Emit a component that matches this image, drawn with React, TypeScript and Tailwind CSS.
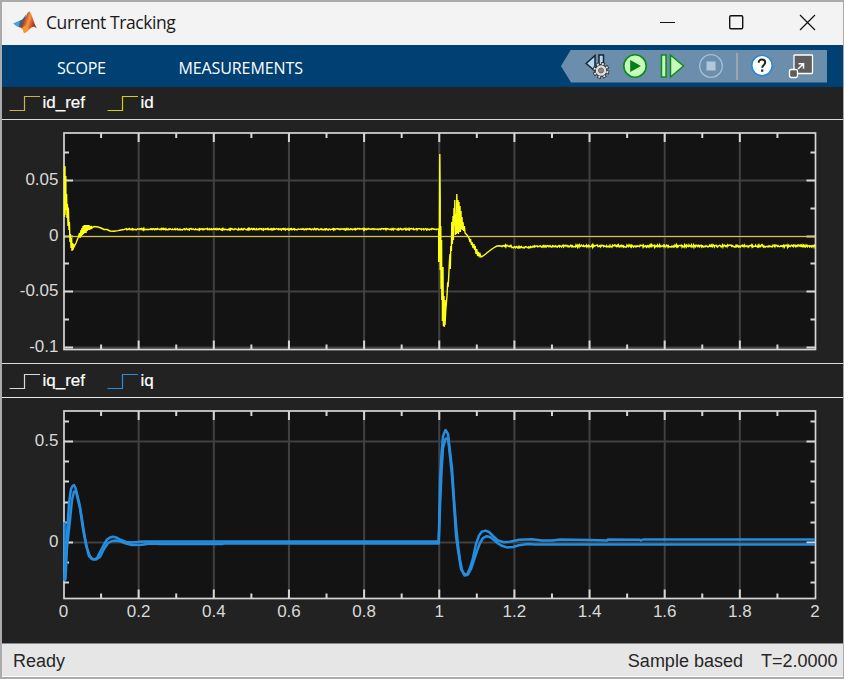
import { ReactNode } from 'react'

type Point = [number, number]

interface TickType {
  y: number
  label?: string
}

interface LegendItemType {
  name: string
  color: string
}

interface PlotPropsType {
  offset: number
  height: number
  top: number
  bottom: number
  ticks: TickType[]
  xLabels?: boolean
  children: ReactNode
}

const LEFT = 64
const RIGHT = 815.5
const STEP = (RIGHT - LEFT) / 20

const idTicks: TickType[] = [
  { y: 152.5 },
  { y: 180.5, label: '0.05' },
  { y: 208.5 },
  { y: 236.5, label: '0' },
  { y: 263.5 },
  { y: 291.5, label: '-0.05' },
  { y: 319.5 },
  { y: 347.5, label: '-0.1' },
]

const iqTicks: TickType[] = [
  { y: 421.5 },
  { y: 441.5, label: '0.5' },
  { y: 461.5 },
  { y: 481.5 },
  { y: 502.5 },
  { y: 522.5 },
  { y: 542.5, label: '0' },
  { y: 562.5 },
  { y: 582.5 },
]

// small repeatable ripple around a steady value
const ripple = (from: number, to: number, y: number, amp: number): Point[] => {
  const points: Point[] = []
  let seed = from * 7 + 13
  for (let x = from; x <= to; x += 0.5) {
    seed = (seed * 16807) % 2147483647
    points.push([x, y + ((seed % 1000) / 1000 - 0.5) * 2 * amp])
  }
  return points
}

const idTrace: Point[] = [
  [64.5, 217], [64.5, 167], [65, 167], [65, 215], [65.8, 176], [66, 210],
  [66.6, 194], [67, 218], [67.4, 204], [68, 226], [68.4, 209], [69, 230],
  [69.4, 222], [70, 242], [70.5, 234], [71, 248], [71.6, 238], [72, 251],
  [72.6, 243], [73, 250], [73.5, 244], [74, 247], [76, 243], [78, 238],
  [79.5, 233], [80, 238], [81, 230], [81.5, 236], [82, 228], [82.6, 235],
  [83, 226], [83.6, 234], [84.2, 225], [84.8, 233], [85.4, 225], [86, 233],
  [86.6, 225], [87.2, 231], [87.8, 225], [88.4, 230], [89, 225], [89.6, 230],
  [90.2, 226], [90.8, 229], [91.5, 226], [92, 228], [94, 226.5], [98, 227],
  [101, 228], [104, 229.5], [107, 229.5], [110, 231], [114, 231.2],
  [118, 230.6], [121, 230], [124, 229.5],
  ...ripple(126, 438, 229.2, 0.7),
  [438.7, 229], [438.7, 262], [439.4, 230], [439.8, 154], [440.2, 200],
  [440.2, 270], [440.8, 226], [441, 289], [441.6, 240], [441.8, 300],
  [442.4, 280], [442.4, 321], [443, 267], [443.4, 326], [444, 296],
  [444.2, 327], [445, 300], [445, 325], [445.8, 310], [446.4, 303],
  [447, 296], [447.6, 284], [448.2, 285], [448.8, 275], [449.4, 262],
  [450, 254], [450.3, 269], [450.8, 246], [451.4, 251], [451.8, 222],
  [452.4, 244], [453, 216], [453.4, 240], [454, 208], [454.4, 226],
  [454.8, 200], [455.4, 235], [456, 214], [456.4, 234], [456.8, 194],
  [457.4, 233], [458, 200], [458.4, 234], [459, 202], [459.4, 232],
  [460, 206], [460.4, 232], [461, 211], [461.4, 229], [462, 217],
  [462.4, 230], [463, 222], [463.6, 231], [464.4, 226], [465, 233],
  [467, 235], [469, 238], [470, 242], [470.6, 239], [471.4, 245],
  [472, 242], [473, 248], [474, 244], [474.6, 250], [475.2, 246],
  [476, 254], [476.8, 249], [477.6, 256], [478.4, 252], [479.2, 256],
  [480, 254], [481, 257], [483, 256], [485, 254.5], [488, 252],
  [492, 249], [495, 247], [497, 246], [500, 245.8],
  ...ripple(501, 511, 245.9, 0.8),
  ...ripple(512, 531, 247.2, 0.8),
  ...ripple(532, 560, 246.4, 0.8),
  ...ripple(561, 815, 246, 1.1),
]

const iqOuter: Point[] = [
  [64.5, 580], [66, 556], [67, 535], [69, 503], [71, 489], [72.5, 486],
  [74, 485], [75.5, 488], [77, 494], [79, 502], [81, 513], [83, 526],
  [85, 538], [87, 548], [89, 554], [91.5, 558.5], [94, 559.5], [97, 558],
  [100, 552], [104, 544.5], [107, 539.5], [110, 537.5], [113, 536.8],
  [117, 537.8], [121, 540], [126, 542], [132, 542.5], [143, 541.5],
  [438.7, 541.5], [439.2, 522], [440, 482], [441.5, 454], [443, 436],
  [445.5, 430], [448, 434], [449.5, 447], [452, 468], [454, 499],
  [456, 525], [458, 545], [460, 560], [462, 570], [464.5, 575.5],
  [467, 575], [470, 568], [473, 558], [476, 544], [479, 535.5],
  [482, 531.6], [485.5, 530.6], [489, 532], [493, 536], [498, 540.5],
  [504, 542.3], [510, 541.8], [519, 539.8], [532, 539.2], [542, 540.4],
  [552, 540.4], [560, 539.6], [590, 540], [607, 540.5], [608, 539.5],
  [640, 539.8], [641, 540.5], [643, 539.5], [815, 539.5],
]

const iqInner: Point[] = [
  [64.5, 522], [64.5, 580], [65.5, 579], [67, 547], [70, 520], [72, 500],
  [74, 491.5], [76, 491.5], [78, 500], [80, 508], [83, 529], [86, 545],
  [89, 556], [92, 559], [96, 559.5], [100, 557], [104, 549], [108, 543],
  [112, 541], [116, 540.5], [121, 541.5], [126, 543.6], [132, 545],
  [142, 544.8], [150, 543.6], [162, 544], [223, 544], [224, 543.5],
  [438.7, 543.5], [440, 507], [441.5, 472], [443, 448], [445.5, 439],
  [448, 438], [450, 456], [452, 476], [454, 504], [456, 536], [458, 550],
  [461, 569], [464, 574], [468, 574.5], [471, 569], [474, 560],
  [477, 551], [480, 543], [483, 538], [486.5, 536.2], [490, 537],
  [494, 540], [498, 543.5], [502, 545.8], [507, 547.4], [513, 547],
  [519, 545.2], [528, 543.9], [535, 544.6], [815, 544.5],
]

const toPoints = (trace: Point[]) => trace.map((p) => p.join(',')).join(' ')

function Legend({ items }: { items: LegendItemType[] }) {
  return (
    <div className="flex h-full items-center pl-[7px]">
      {items.map((item) => (
        <div key={item.name} className="mr-[22px] flex items-center">
          <svg width="32" height="18" viewBox="0 0 32 18" fill="none">
            <path d="M0.500 16.500H15.500V2.500H31" stroke={item.color} strokeWidth="1.200" />
          </svg>
          <span className="ml-[1.5px] text-[17px] leading-5 text-white [-webkit-text-stroke:0.2px_white]">
            {item.name}
          </span>
        </div>
      ))}
    </div>
  )
}

function Plot(props: PlotPropsType) {
  const { offset, height, top, bottom, ticks } = props
  const columns = Array.from({ length: 21 }, (_, i) => i)

  return (
    <svg
      className="block"
      width="841"
      height={height}
      viewBox={`2 ${offset} 841 ${height}`}
      fontFamily="Liberation Sans, Arial, sans-serif"
      fontSize="17"
      fill="#d9d9d9"
    >
      <rect x={LEFT} y={top} width={RIGHT - LEFT} height={bottom - top} fill="#131313" />
      <g stroke="#414141" strokeWidth="2">
        {columns
          .filter((i) => i % 2 === 0 && i > 0 && i < 20)
          .map((i) => (
            <line key={i} x1={LEFT + i * STEP - 0.5} x2={LEFT + i * STEP - 0.5} y1={top} y2={bottom} />
          ))}
        {ticks
          .filter((t) => t.label)
          .map((t) => (
            <line key={t.y} x1={LEFT} x2={RIGHT} y1={t.y} y2={t.y} />
          ))}
      </g>
      <g stroke="#d6d6d6" strokeWidth="2" fill="none">
        <rect x={LEFT} y={top} width={RIGHT - LEFT} height={bottom - top} strokeWidth="1.7" />
        {columns.slice(1, 20).map((i) => {
          const x = LEFT + i * STEP - 0.5
          const size = i % 2 === 0 ? 9 : 5
          return <path key={i} d={`M${x} ${top}v${size}M${x} ${bottom}v${-size}`} />
        })}
        {ticks.map((t) => {
          const size = t.label ? 9 : 5
          return <path key={t.y} d={`M${LEFT} ${t.y}h${size}M${RIGHT} ${t.y}h${-size}`} />
        })}
      </g>
      {props.children}
      {ticks
        .filter((t) => t.label)
        .map((t) => (
          <text key={t.y} x="58.5" y={t.y + 4.5} textAnchor="end">
            {t.label}
          </text>
        ))}
      {props.xLabels &&
        columns
          .filter((i) => i % 2 === 0)
          .map((i) => (
            <text key={i} x={LEFT + i * STEP - 0.5} y={bottom + 18} textAnchor="middle">
              {i / 10}
            </text>
          ))}
    </svg>
  )
}

function MatlabLogo() {
  return (
    <svg className="mb-[2px] ml-[11px]" width="24" height="23" viewBox="0 0 24 23">
      <defs>
        <linearGradient id="peak" x1="0" x2="1" y1="0" y2="0.35">
          <stop offset="0" stopColor="#5b1a20" />
          <stop offset="0.4" stopColor="#c4401e" />
          <stop offset="0.62" stopColor="#f39a4a" />
          <stop offset="0.8" stopColor="#d9501f" />
          <stop offset="1" stopColor="#94291a" />
        </linearGradient>
      </defs>
      <path d="M0 12.5 7 9.5 10 12 6.5 16.5 4 15.5Z" fill="#4ba0dc" />
      <path d="M7 9.5C10 9 11 6 13 3.5L12 10 8.5 16 6 15.5Z" fill="#2f6490" />
      <path d="M6 16C9 15 10 11 13 5.5 14 2.5 15.5 0 16.5 0.5 19 2 20 11 24 17.5 21 14.5 19 15.5 16 18.5 14 20.5 12.5 22 11 22 10.5 19 9 16.5 6 16Z" fill="url(#peak)" />
      <path d="M8.5 17C10 18 10.5 20 11 22 13 21.5 14.5 19.5 16 18L12.5 14.5Z" fill="#ed9b31" />
    </svg>
  )
}

function StepOptionsIcon() {
  return (
    <svg width="25" height="25" viewBox="0 0 25 25">
      <path d="M10 1.5V17L1.200 9.500Z" fill="#a9dcfb" stroke="#222" strokeWidth="1.5" />
      <path d="M14 1h4.500v12H14z" fill="#a9dcfb" stroke="#222" strokeWidth="1.5" />
      <g transform="translate(16 16.5)">
        <circle r="6.6" fill="none" stroke="#303030" strokeWidth="3.6" strokeDasharray="3.4 1.784" />
        <circle r="5.9" fill="#dedede" stroke="#303030" strokeWidth="1.2" />
        <circle r="6.6" fill="none" stroke="#dedede" strokeWidth="2" strokeDasharray="1.9 3.284" strokeDashoffset="-0.75" />
        <circle r="2.500" fill="#888" stroke="#666" />
      </g>
    </svg>
  )
}

function Toolbar() {
  return (
    <div className="mr-4 flex h-[33px] w-[266px] bg-[#6a8eac] [clip-path:polygon(10px_0,100%_0,100%_100%,10px_100%,0_50%)]">
      <div className="flex items-center pl-[24px]">
        <StepOptionsIcon />
        <svg className="ml-[12px]" width="26" height="26" viewBox="0 0 26 26">
          <circle cx="13" cy="13" r="11.2" fill="#c8ffb8" stroke="#0b8a1d" strokeWidth="1.6" />
          <path d="M8.2 7v12L19 13Z" fill="#067d18" />
        </svg>
        <svg className="ml-[12px]" width="25" height="26" viewBox="0 0 25 26" fill="#c8ffb8" stroke="#0b8a1d" strokeWidth="1.5">
          <path d="M1.5 2h4.5v22H1.5z" />
          <path d="M10.5 2v22L23.500 13Z" />
        </svg>
        <svg className="ml-[13px]" width="26" height="26" viewBox="0 0 26 26">
          <circle cx="13" cy="13" r="11.3" fill="none" stroke="#a9c1d5" strokeWidth="1.3" />
          <path d="M8.5 8.5h9v9h-9z" fill="#b1c7da" />
        </svg>
        <div className="ml-[12px] h-[27px] w-[2px] bg-[#9ca6ad]" />
        <svg className="ml-[12px]" width="24" height="24" viewBox="0 0 24 24">
          <circle cx="12" cy="11.5" r="10.1" fill="white" stroke="#2389dc" strokeWidth="1.4" />
          <path d="M8.7 8.8C8.7 6.6 10 5.6 11.9 5.6S15.2 6.7 15.2 8.6C15.2 10.9 12.2 11 12.2 13.7" fill="none" stroke="#222" strokeWidth="2" />
          <path d="M11.1 15.5h2.2v2.2h-2.200z" fill="#222" />
        </svg>
        <svg className="ml-[14px]" width="26" height="26" viewBox="0 0 26 26" fill="#5d5d5d" stroke="white" strokeWidth="1.3">
          <rect x="6" y="2" width="18.5" height="18.5" rx="0.7" />
          <rect x="1.5" y="16.5" width="8" height="8" rx="1.8" />
          <path d="M10 16 15.5 10.7M10.5 10.7h5v5" fill="none" strokeWidth="1.5" />
        </svg>
      </div>
    </div>
  )
}

export default function App() {
  return (
    <div className="flex h-[679px] w-[844px] flex-col border-t-2 border-r border-b-2 border-l-2 border-[#ababab] bg-[#222222] font-['Liberation_Sans',Arial,sans-serif]">
      <header className="flex h-[43px] shrink-0 items-center bg-[#f3f3f3]">
        <MatlabLogo />
        <h1 className="ml-[9px] grow pb-[2px] font-['Open_Sans',sans-serif] text-[17.5px] tracking-[-0.42px] text-[#191919]">
          Current Tracking
        </h1>
        <svg className="mr-[26px] mb-[3px]" width="158" height="18" viewBox="0 0 158 18" fill="none" stroke="#111">
          <path d="M1 9.5h15" />
          <rect x="70.7" y="2.700" width="13" height="13" rx="1.2" strokeWidth="1.4" />
          <path d="M141 2l15 15M156 2l-15 15" strokeWidth="1.2" />
        </svg>
      </header>

      <nav className="flex h-[42px] shrink-0 items-center bg-[#004073] font-['Open_Sans',sans-serif] text-[16px] text-white">
        <span className="ml-[55px] w-[121.5px] pt-[3px] tracking-[-0.2px]">SCOPE</span>
        <span className="grow pt-[3px] tracking-[-0.1px]">MEASUREMENTS</span>
        <Toolbar />
      </nav>

      <div className="h-[33px] shrink-0 border-b border-[#d9d9d9]">
        <Legend items={[{ name: 'id_ref', color: '#c8b44b' }, { name: 'id', color: '#d1d100' }]} />
      </div>
      <div className="h-[244px] shrink-0 border-b border-[#d9d9d9]">
        <Plot offset={120} height={243} top={133} bottom={349.5} ticks={idTicks}>
          <path d="M65 236.5H815" stroke="#dfc63b" />
          <polyline points={toPoints(idTrace)} fill="none" stroke="#ffff14" strokeWidth="1.4" />
        </Plot>
      </div>

      <div className="h-[34px] shrink-0 border-b border-[#e9e9e9]">
        <Legend items={[{ name: 'iq_ref', color: '#d9d9d9' }, { name: 'iq', color: '#268cdd' }]} />
      </div>
      <div className="h-[246px] shrink-0 border-b border-[#8a8a8a]">
        <Plot offset={398} height={245} top={411} bottom={598.5} ticks={iqTicks} xLabels>
          <g fill="none" stroke="#268cdd" strokeWidth="2.5" strokeLinejoin="round">
            <polyline points={toPoints(iqOuter)} />
            <polyline points={toPoints(iqInner)} />
          </g>
        </Plot>
      </div>

      <footer className="flex min-h-0 grow items-center border-b border-white bg-[#e6e6e6] pt-[2px] pr-[5.5px] pl-[11px] text-[18px] text-[#262626]">
        <span className="grow">Ready</span>
        <span className="mr-[18px]">Sample based</span>
        <span>T=2.0000</span>
      </footer>
    </div>
  )
}
